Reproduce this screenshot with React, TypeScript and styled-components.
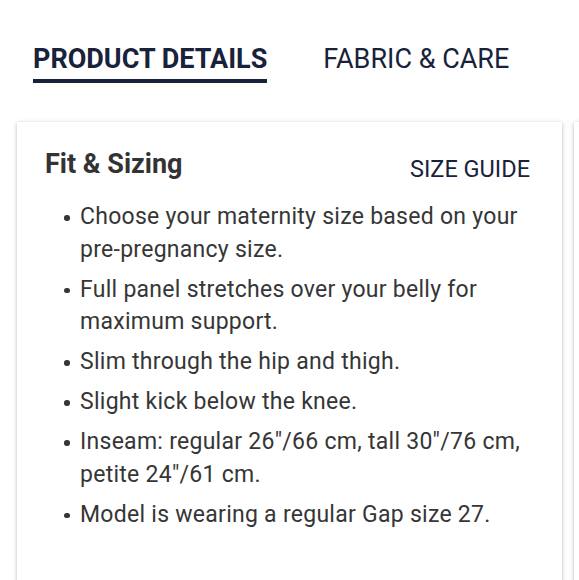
import React, { useState } from 'react';
import styled, { createGlobalStyle } from 'styled-components';

const GlobalStyle = createGlobalStyle`
  html, body {
    margin: 0;
    padding: 0;
    background: #fff;
    font-family: Roboto, 'Noto Sans', sans-serif;
    overflow: hidden;
  }
`;

const tabs = ['PRODUCT DETAILS', 'FABRIC & CARE'];

const fitItems = [
  'Choose your maternity size based on your pre-pregnancy size.',
  'Full panel stretches over your belly for maximum support.',
  'Slim through the hip and thigh.',
  'Slight kick below the knee.',
  'Inseam: regular 26"/66 cm, tall 30"/76 cm, petite 24"/61 cm.',
  'Model is wearing a regular Gap size 27.',
];

const App = () => {
  const [active, setActive] = useState(0);

  return (
    <>
      <GlobalStyle />
      <Page>
        <TabBar>
          {tabs.map((tab, i) => (
            <Tab key={tab} active={i === active} onClick={() => setActive(i)}>
              {tab}
            </Tab>
          ))}
        </TabBar>
        <Track>
          <Card>
            <CardHeader>
              <CardTitle>Fit &amp; Sizing</CardTitle>
              <SizeGuide>SIZE GUIDE</SizeGuide>
            </CardHeader>
            <BulletList>
              {fitItems.map((item) => (
                <Bullet key={item}>{item}</Bullet>
              ))}
            </BulletList>
          </Card>
          <Card />
        </Track>
      </Page>
    </>
  );
};

const Page = styled.div`
  width: 579px;
  height: 580px;
  overflow: hidden;
`;

const TabBar = styled.div`
  display: flex;
  gap: 56px;
  padding: 43px 0 0 33px;
`;

const Tab = styled.button<{ active: boolean }>`
  border: none;
  background: none;
  padding: 0 0 4px;
  font-family: Roboto, sans-serif;
  font-size: 27px;
  font-weight: ${({ active }) => (active ? 700 : 400)};
  color: #18223a;
  border-bottom: 4px solid ${({ active }) => (active ? '#18223a' : 'transparent')};
  cursor: pointer;
`;

const Track = styled.div`
  display: flex;
  gap: 12px;
  padding: 39px 0 0 17px;
`;

const Card = styled.div`
  flex: 0 0 545px;
  box-sizing: border-box;
  min-height: 500px;
  padding: 26px 32px 0 28px;
  background: #fff;
  box-shadow: 0 1px 4px rgba(0, 0, 0, 0.28);
`;

const CardHeader = styled.div`
  display: flex;
  justify-content: space-between;
  align-items: flex-start;
`;

const CardTitle = styled.h2`
  margin: 0;
  font-size: 27px;
  font-weight: 700;
  color: #333;
`;

const SizeGuide = styled.a`
  margin-top: 7px;
  font-size: 23.5px;
  color: #18223a;
  cursor: pointer;
`;

const BulletList = styled.ul`
  margin: 18px 0 0;
  padding: 0 0 0 35px;
  list-style: none;
`;

const Bullet = styled.li`
  position: relative;
  font-size: 23px;
  letter-spacing: 0.27px;
  line-height: 32.5px;
  color: #363636;
  margin-bottom: 7.5px;

  &::before {
    content: '';
    position: absolute;
    left: -16px;
    top: 14px;
    width: 5.5px;
    height: 5.5px;
    border-radius: 50%;
    background: #363636;
  }
`;

export default App;
